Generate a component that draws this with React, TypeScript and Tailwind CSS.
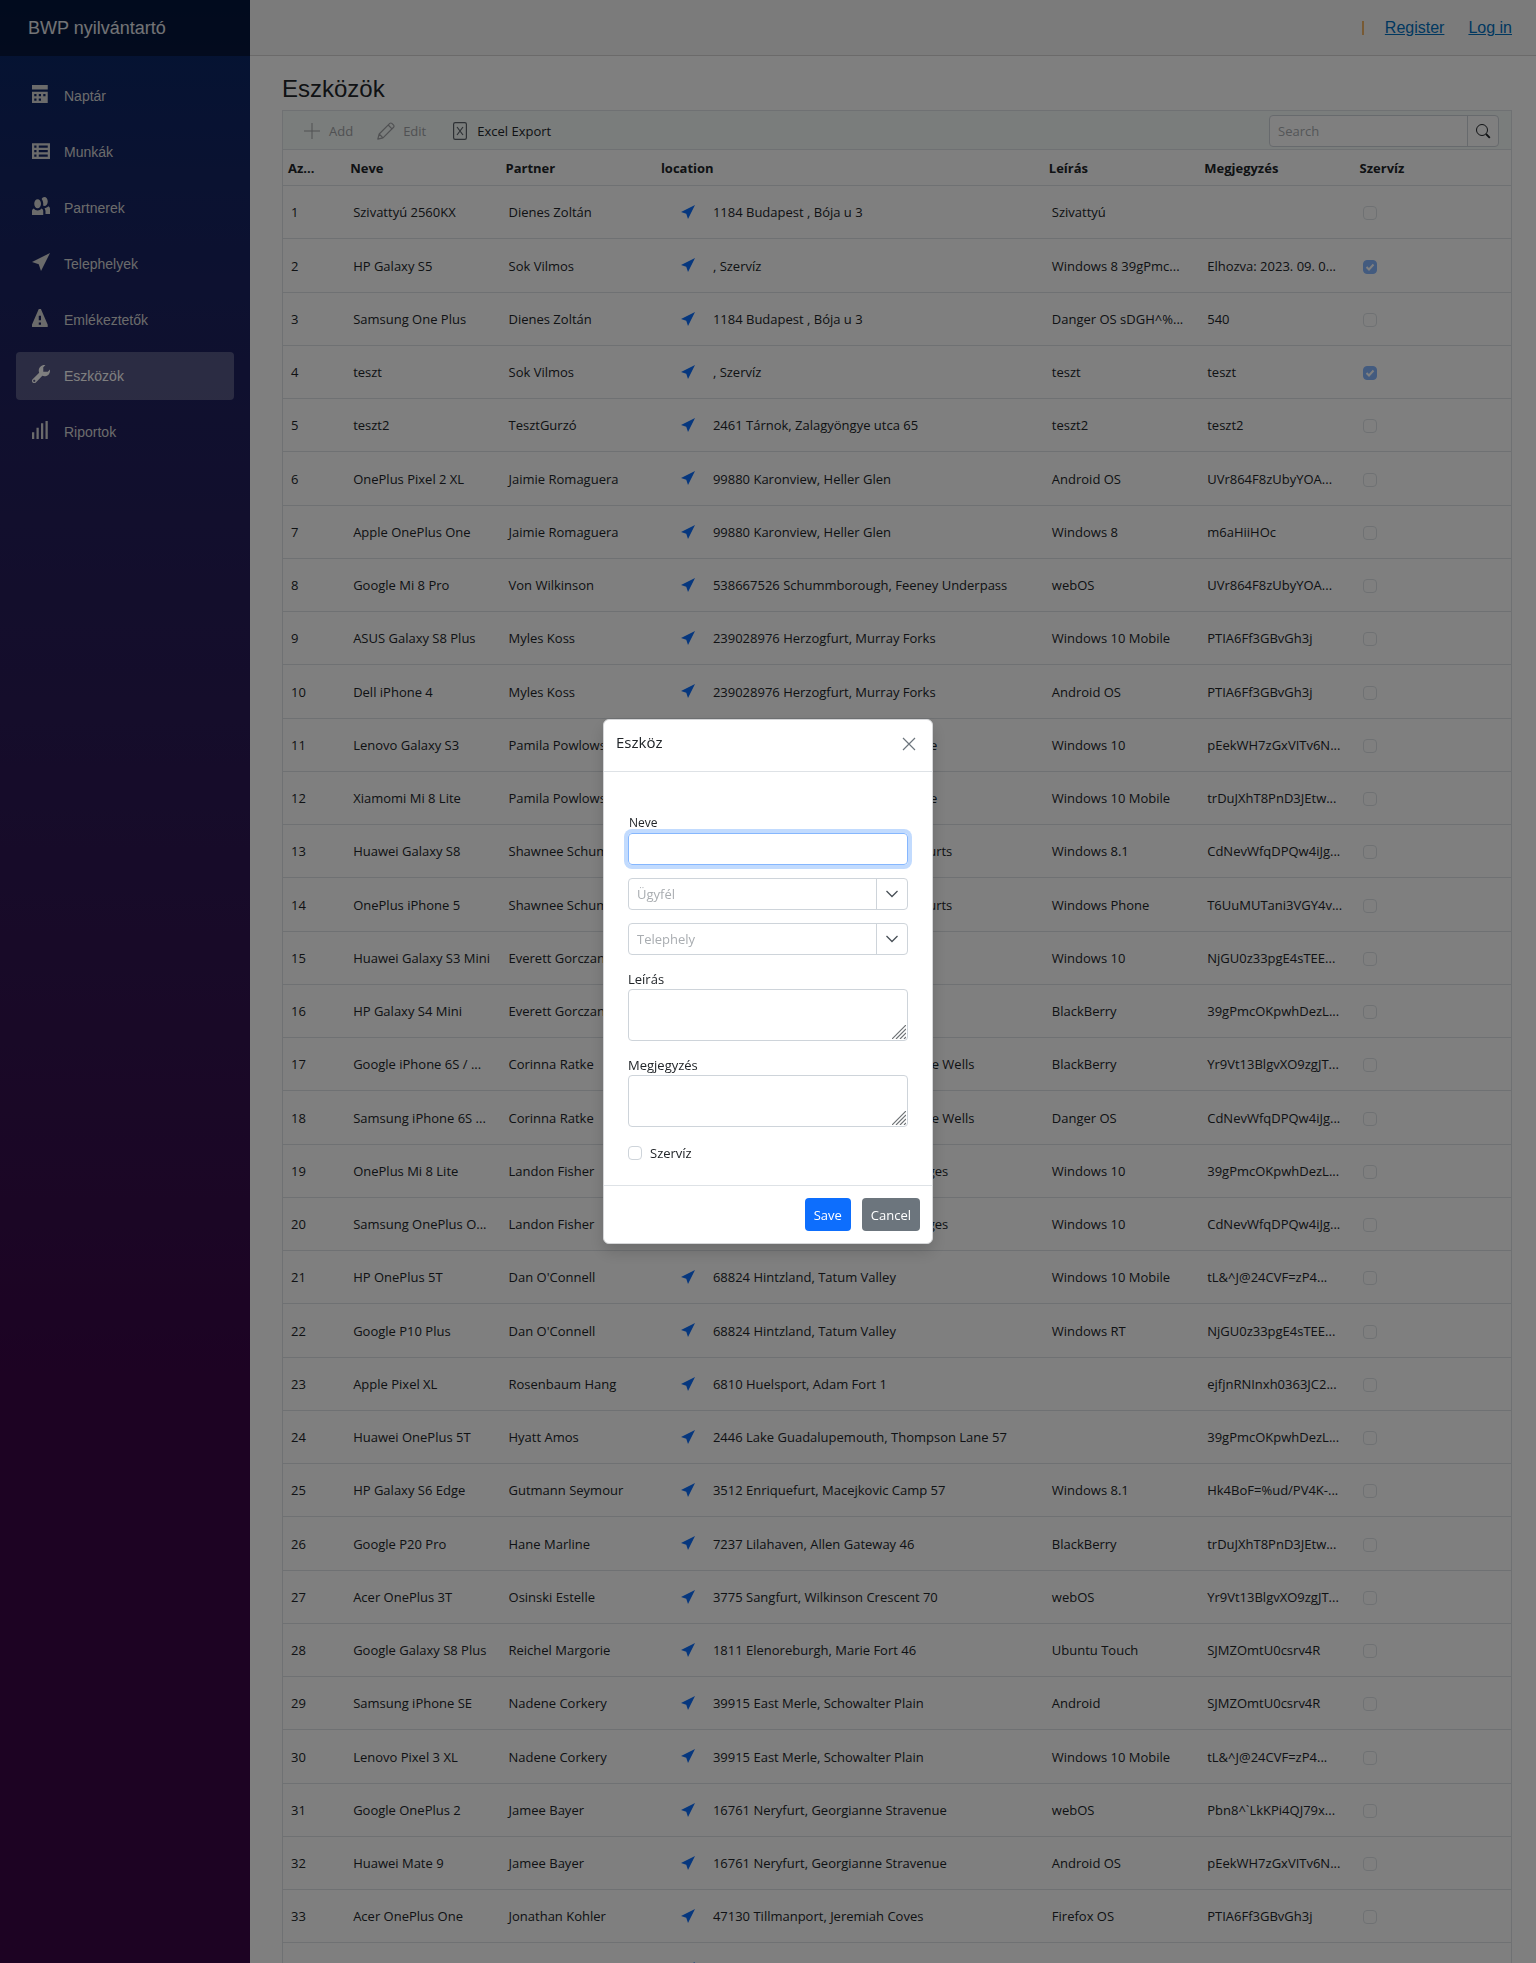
import React from "react";

const ICONS = {
  calendar:
    "M0 0v2h7v-2h-7zm0 3v4.91c0 .05.04.09.09.09h6.81c.05 0 .09-.04.09-.09v-4.91h-7zm1 1h1v1h-1v-1zm2 0h1v1h-1v-1zm2 0h1v1h-1v-1zm-4 2h1v1h-1v-1zm2 0h1v1h-1v-1z",
  spreadsheet:
    "M.09 1c-.05 0-.09.04-.09.09v6.81c0 .05.04.09.09.09h7.81c.05 0 .09-.04.09-.09v-6.81c0-.05-.04-.09-.09-.09h-7.81zm.91 1h1v1h-1v-1zm2 0h4v1h-4v-1zm-2 2h1v1h-1v-1zm2 0h4v1h-4v-1zm-2 2h1v1h-1v-1zm2 0h4v1h-4v-1z",
  people:
    "M5.5 0c-.51 0-.95.35-1.22.88.45.54.72 1.28.72 2.13 0 .29-.03.55-.09.81.19.11.38.19.59.19.83 0 1.5-.9 1.5-2s-.67-2-1.5-2zm-3 1c-.83 0-1.5.9-1.5 2s.67 2 1.5 2 1.5-.9 1.5-2-.67-2-1.5-2zm4.75 3.16c-.43.51-1.02.82-1.69.84.27.38.44.84.44 1.34v1.16h2v-2.16c0-.52-.31-.97-.75-1.19zm-6.5 1c-.44.22-.75.67-.75 1.19v1.66h5v-1.66c0-.52-.31-.97-.75-1.19-.45.53-1.06.84-1.75.84s-1.3-.32-1.75-.84z",
  location: "M8 0l-8 4 3 1 1 3 4-8z",
  warning:
    "M3.09 0c-.06 0-.1.04-.13.09l-2.94 6.81c-.02.05-.03.13-.03.19v.81c0 .05.04.09.09.09h6.81c.05 0 .09-.04.09-.09v-.81c0-.05-.01-.14-.03-.19l-2.94-6.81c-.02-.05-.07-.09-.13-.09h-.81zm-.09 3h1v2h-1v-2zm0 3h1v1h-1v-1z",
  wrench:
    "M5.5 0c-1.38 0-2.5 1.12-2.5 2.5 0 .32.08.62.19.91l-2.91 2.88c-.39.39-.39 1.05 0 1.44.2.2.46.28.72.28.26 0 .52-.09.72-.28l2.88-2.91c.28.11.58.19.91.19 1.38 0 2.5-1.12 2.5-2.5 0-.16 0-.32-.03-.47l-.97.97h-2v-2l.97-.97c-.15-.03-.31-.03-.47-.03zm-4.5 6.5c.28 0 .5.22.5.5s-.22.5-.5.5-.5-.22-.5-.5.22-.5.5-.5z",
  signal: "M6 0v8h1v-8h-1zm-2 1v7h1v-7h-1zm-2 2v5h1v-5h-1zm-2 2v3h1v-3h-1z",
};

type IconName = keyof typeof ICONS;

function Icon({ name, className }: { name: IconName; className: string }) {
  return (
    <svg viewBox="0 0 8 8" fill="currentColor" aria-hidden="true" className={className}>
      <path d={ICONS[name]} />
    </svg>
  );
}

const NAV: { icon: IconName; label: string; active?: boolean }[] = [
  { icon: "calendar", label: "Naptár" },
  { icon: "spreadsheet", label: "Munkák" },
  { icon: "people", label: "Partnerek" },
  { icon: "location", label: "Telephelyek" },
  { icon: "warning", label: "Emlékeztetők" },
  { icon: "wrench", label: "Eszközök", active: true },
  { icon: "signal", label: "Riportok" },
];

type Row = [name: string, partner: string, location: string, description: string, note: string, service?: boolean];

const ROWS: Row[] = [
  ["Szivattyú 2560KX", "Dienes Zoltán", "1184 Budapest , Bója u 3", "Szivattyú", ""],
  ["HP Galaxy S5", "Sok Vilmos", ", Szervíz", "Windows 8 39gPmc...", "Elhozva: 2023. 09. 0...", true],
  ["Samsung One Plus", "Dienes Zoltán", "1184 Budapest , Bója u 3", "Danger OS sDGH^%...", "540"],
  ["teszt", "Sok Vilmos", ", Szervíz", "teszt", "teszt", true],
  ["teszt2", "TesztGurzó", "2461 Tárnok, Zalagyöngye utca 65", "teszt2", "teszt2"],
  ["OnePlus Pixel 2 XL", "Jaimie Romaguera", "99880 Karonview, Heller Glen", "Android OS", "UVr864F8zUbyYOA..."],
  ["Apple OnePlus One", "Jaimie Romaguera", "99880 Karonview, Heller Glen", "Windows 8", "m6aHiiHOc"],
  ["Google Mi 8 Pro", "Von Wilkinson", "538667526 Schummborough, Feeney Underpass", "webOS", "UVr864F8zUbyYOA..."],
  ["ASUS Galaxy S8 Plus", "Myles Koss", "239028976 Herzogfurt, Murray Forks", "Windows 10 Mobile", "PTIA6Ff3GBvGh3j"],
  ["Dell iPhone 4", "Myles Koss", "239028976 Herzogfurt, Murray Forks", "Android OS", "PTIA6Ff3GBvGh3j"],
  ["Lenovo Galaxy S3", "Pamila Powlowski", "14077 Port Karenville, Danielle Grove", "Windows 10", "pEekWH7zGxVITv6N..."],
  ["Xiamomi Mi 8 Lite", "Pamila Powlowski", "14077 Port Karenville, Danielle Grove", "Windows 10 Mobile", "trDuJXhT8PnD3JEtw..."],
  ["Huawei Galaxy S8", "Shawnee Schumm", "50213 Lake Marionton, Schumm Courts", "Windows 8.1", "CdNevWfqDPQw4iJg..."],
  ["OnePlus iPhone 5", "Shawnee Schumm", "50213 Lake Marionton, Schumm Courts", "Windows Phone", "T6UuMUTani3VGY4v..."],
  ["Huawei Galaxy S3 Mini", "Everett Gorczany", "7214 Iva Way", "Windows 10", "NjGU0z33pgE4sTEE..."],
  ["HP Galaxy S4 Mini", "Everett Gorczany", "7214 Iva Way", "BlackBerry", "39gPmcOKpwhDezL..."],
  ["Google iPhone 6S / ...", "Corinna Ratke", "30584 North Corinnamouth, Suzanne Wells", "BlackBerry", "Yr9Vt13BlgvXO9zgJT..."],
  ["Samsung iPhone 6S ...", "Corinna Ratke", "30584 North Corinnamouth, Suzanne Wells", "Danger OS", "CdNevWfqDPQw4iJg..."],
  ["OnePlus Mi 8 Lite", "Landon Fisher", "81346 Port Landonbury, Fisher Bridges", "Windows 10", "39gPmcOKpwhDezL..."],
  ["Samsung OnePlus O...", "Landon Fisher", "81346 Port Landonbury, Fisher Bridges", "Windows 10", "CdNevWfqDPQw4iJg..."],
  ["HP OnePlus 5T", "Dan O'Connell", "68824 Hintzland, Tatum Valley", "Windows 10 Mobile", "tL&^J@24CVF=zP4..."],
  ["Google P10 Plus", "Dan O'Connell", "68824 Hintzland, Tatum Valley", "Windows RT", "NjGU0z33pgE4sTEE..."],
  ["Apple Pixel XL", "Rosenbaum Hang", "6810 Huelsport, Adam Fort 1", "", "ejfjnRNInxh0363JC2..."],
  ["Huawei OnePlus 5T", "Hyatt Amos", "2446 Lake Guadalupemouth, Thompson Lane 57", "", "39gPmcOKpwhDezL..."],
  ["HP Galaxy S6 Edge", "Gutmann Seymour", "3512 Enriquefurt, Macejkovic Camp 57", "Windows 8.1", "Hk4BoF=%ud/PV4K-..."],
  ["Google P20 Pro", "Hane Marline", "7237 Lilahaven, Allen Gateway 46", "BlackBerry", "trDuJXhT8PnD3JEtw..."],
  ["Acer OnePlus 3T", "Osinski Estelle", "3775 Sangfurt, Wilkinson Crescent 70", "webOS", "Yr9Vt13BlgvXO9zgJT..."],
  ["Google Galaxy S8 Plus", "Reichel Margorie", "1811 Elenoreburgh, Marie Fort 46", "Ubuntu Touch", "SJMZOmtU0csrv4R"],
  ["Samsung iPhone SE", "Nadene Corkery", "39915 East Merle, Schowalter Plain", "Android", "SJMZOmtU0csrv4R"],
  ["Lenovo Pixel 3 XL", "Nadene Corkery", "39915 East Merle, Schowalter Plain", "Windows 10 Mobile", "tL&^J@24CVF=zP4..."],
  ["Google OnePlus 2", "Jamee Bayer", "16761 Neryfurt, Georgianne Stravenue", "webOS", "Pbn8^`LkKPi4QJ79x..."],
  ["Huawei Mate 9", "Jamee Bayer", "16761 Neryfurt, Georgianne Stravenue", "Android OS", "pEekWH7zGxVITv6N..."],
  ["Acer OnePlus One", "Jonathan Kohler", "47130 Tillmanport, Jeremiah Coves", "Firefox OS", "PTIA6Ff3GBvGh3j"],
  ["", "", "", "", ""],
];

const HEADERS = ["Az...", "Neve", "Partner", "location", "Leírás", "Megjegyzés", "Szervíz"];

function Sidebar() {
  return (
    <aside className="h-full w-[250px] shrink-0 bg-linear-to-b from-[#052767] to-[#3a0647] to-70%">
      <div className="flex h-14 items-center bg-black/40 pl-7">
        <a href="#" className="text-[18px] text-white/90">BWP nyilvántartó</a>
      </div>
      <nav className="flex flex-col gap-2 px-4 pt-4">
        {NAV.map((item) => (
          <a
            key={item.label}
            href="#"
            className={
              item.active
                ? "flex h-12 items-center gap-[14px] rounded bg-white/25 px-4 text-sm text-white"
                : "flex h-12 items-center gap-[14px] rounded px-4 text-sm text-[#d7d7d7]"
            }
          >
            <Icon name={item.icon} className="mb-1 size-[18px]" />
            <span>{item.label}</span>
          </a>
        ))}
      </nav>
    </aside>
  );
}

function Toolbar() {
  return (
    <div className="flex h-[39px] items-center border-b border-[#dee2e6] bg-[#f5faf8] pt-[2px] pr-3 pl-5">
      <button type="button" disabled className="flex items-center gap-2 text-[#a0a3a6]">
        <svg viewBox="0 0 18 18" className="size-[18px]" fill="none" stroke="currentColor">
          <path d="M9 1v16M1 9h16" />
        </svg>
        <span className="pt-px">Add</span>
      </button>
      <button type="button" disabled className="ml-6 flex items-center gap-2 text-[#a0a3a6]">
        <svg viewBox="0 0 18 18" className="size-[18px]" fill="none" stroke="currentColor" strokeWidth="1.200" strokeLinejoin="round">
          <path d="M.8 17.200l1.400-5.200L12.800 1.400a1.400 1.400 0 0 1 2 0l1.800 1.800a1.400 1.400 0 0 1 0 2L6 15.800zM2.200 12l3.800 3.800M11.200 3l3.800 3.800" />
        </svg>
        <span className="pt-px">Edit</span>
      </button>
      <button type="button" className="ml-[25px] flex items-center gap-2 text-[#212529]">
        <svg viewBox="0 0 18 18" className="size-[18px] text-[#5c636a]" fill="none" stroke="currentColor" strokeWidth="1.200">
          <rect x="2.600" y=".6" width="12.800" height="16.800" rx="1.600" />
          <path d="M6 5l6 8M12 5l-6 8" />
        </svg>
        <span className="pt-px">Excel Export</span>
      </button>
      <div className="ml-auto flex h-8 w-[230px] overflow-hidden rounded border border-[#ced4da] bg-white">
        <input aria-label="Search" placeholder="Search" className="min-w-0 flex-1 px-2 pt-[2px] placeholder:text-[#a9adb1] outline-none" />
        <button type="button" aria-label="Search" className="flex w-[31px] items-center justify-center border-l border-[#ced4da] text-[#212529]">
          <svg viewBox="0 0 16 16" className="size-4" fill="none" stroke="currentColor">
            <circle cx="7" cy="7" r="5.500" />
            <path d="M11 11l3.800 3.800" strokeWidth="1.800" />
          </svg>
        </button>
      </div>
    </div>
  );
}

function Grid() {
  return (
    <table className="w-full table-fixed border-separate border-spacing-0 text-left">
      <colgroup>
        <col className="w-[62px]" />
        <col className="w-[155px]" />
        <col className="w-[155px]" />
        <col className="w-[387px]" />
        <col className="w-[155px]" />
        <col className="w-[155px]" />
        <col className="w-[156px]" />
      </colgroup>
      <thead>
        <tr className="h-9">
          {HEADERS.map((h) => (
            <th key={h} scope="col" className="border-b border-[#dee2e6] pt-[2px] pl-[5px] font-bold">{h}</th>
          ))}
        </tr>
      </thead>
      <tbody className="[&_td]:border-b [&_td]:border-[#dee2e6] [&_td]:pt-[2px] [&_td]:pl-2 [&_td]:whitespace-nowrap">
        {ROWS.map(([name, partner, location, description, note, service], i) => (
          <tr key={i} className="h-[53px] [&:nth-child(4n+2)]:h-[54px]">
            <td>{name && i + 1}</td>
            <td>{name}</td>
            <td>{partner}</td>
            <td>
              <div className="flex h-5 items-center gap-[18px] pl-[17px]">
                <a href="#" aria-label="Location" className="text-[#0d6efd]">
                  <Icon name="location" className="mb-[3px] size-[14px]" />
                </a>
                <span>{location}</span>
              </div>
            </td>
            <td>{description}</td>
            <td>{note}</td>
            <td>
              <span className="relative block size-[14px]">
                <input
                  type="checkbox"
                  aria-label={"Szervíz " + (i + 1)}
                  defaultChecked={service}
                  disabled
                  className="block size-[14px] appearance-none rounded border border-[#dee2e6] bg-white checked:border-[#86b6fe] checked:bg-[#86b6fe]"
                />
                {service && (
                  <svg viewBox="0 0 14 14" className="absolute inset-0 size-[14px]" fill="none" stroke="white" strokeWidth="2">
                    <path d="M3.500 7l2.500 2.500 4.500-5" />
                  </svg>
                )}
              </span>
            </td>
          </tr>
        ))}
      </tbody>
    </table>
  );
}

function Dropdown({ label }: { label: string }) {
  return (
    <div className="relative h-8">
      <select aria-label={label} defaultValue="" className="size-full appearance-none rounded border border-[#ced4da] bg-white px-2 pt-[2px] text-[#a9adb1]">
        <option value="">{label}</option>
      </select>
      <span className="pointer-events-none absolute inset-y-px right-px flex w-[31px] items-center justify-center border-l border-[#ced4da]">
        <svg viewBox="0 0 12 8" className="h-2 w-3" fill="none" stroke="#495057" strokeWidth="1.300">
          <path d="M.5 1L6 6.500 11.500 1" />
        </svg>
      </span>
    </div>
  );
}

function TextArea({ id, label }: { id: string; label: string }) {
  return (
    <div className="mt-3">
      <label htmlFor={id} className="block pt-[2px] leading-5">{label}</label>
      <div className="relative">
        <textarea id={id} className="block h-[52px] w-full resize-none rounded border border-[#ced4da] p-2" />
        <svg viewBox="0 0 14 14" className="absolute right-[2px] bottom-[2px] size-[14px]" stroke="#6f7376" strokeWidth="1.200" fill="none" aria-hidden="true">
          <path d="M0 14L14 0M4 14L14 4M8 14l6-6M12 14l2-2" />
        </svg>
      </div>
    </div>
  );
}

function DeviceDialog() {
  return (
    <div role="dialog" aria-label="Eszköz" className="w-[330px] rounded-md border border-[#d5d6d8] bg-white text-[#212529] shadow-[0_8px_16px_rgba(0,0,0,0.15)]">
      <div className="flex h-13 items-start justify-between border-b border-[#dee2e6] pt-3 pr-4 pl-3">
        <h2 className="text-[15px] leading-5">Eszköz</h2>
        <button type="button" aria-label="Close" className="mt-[5px] text-[#6c757d]">
          <svg viewBox="0 0 14 14" className="size-[14px]" fill="none" stroke="currentColor" strokeWidth="1.200">
            <path d="M1 1l12 12M13 1L1 13" />
          </svg>
        </button>
      </div>
      <form className="px-6 pt-[41px] pb-[22px]">
        <label htmlFor="neve" className="block pl-px text-xs leading-5">Neve</label>
        <input id="neve" className="block h-8 w-full rounded border border-[#86b7fe] px-2 ring-4 ring-[#c2dbfe] outline-none" />
        <div className="mt-[13px] flex flex-col gap-[13px]">
          <Dropdown label="Ügyfél" />
          <Dropdown label="Telephely" />
        </div>
        <TextArea id="leiras" label="Leírás" />
        <TextArea id="megjegyzes" label="Megjegyzés" />
        <label className="mt-4 flex items-center gap-2 leading-5">
          <input type="checkbox" className="size-[14px] appearance-none rounded border border-[#ced4da]" />
          Szervíz
        </label>
      </form>
      <div className="flex justify-end gap-[11px] border-t border-[#dee2e6] p-3">
        <button type="button" className="h-[33px] rounded bg-[#0d6efd] px-[9px] pt-[2px] text-white">Save</button>
        <button type="button" className="h-[33px] rounded bg-[#6c757d] px-[9px] pt-[2px] text-white">Cancel</button>
      </div>
    </div>
  );
}

export default function App() {
  return (
    <div className="relative flex h-screen overflow-hidden bg-white font-['Liberation_Sans',sans-serif] text-[#212529]">
      <Sidebar />
      <main className="min-w-0 flex-1">
        <header className="flex h-14 items-center justify-end gap-6 border-b border-[#d6d5d5] bg-[#f7f7f7] pr-6 text-base">
          <span className="mr-[-3px] h-[14px] w-[2px] bg-[#f0b468]" />
          <a href="#" className="text-[#0071c1] underline">Register</a>
          <a href="#" className="text-[#0071c1] underline">Log in</a>
        </header>
        <div className="pr-6 pl-8">
          <h1 className="pt-[19px] pb-[7px] text-2xl leading-7">Eszközök</h1>
          <section className="border border-[#dee2e6] font-['Open_Sans',sans-serif] text-[13px]">
            <Toolbar />
            <Grid />
          </section>
        </div>
      </main>
      <div className="fixed inset-0 flex items-center justify-center bg-black/50 font-['Open_Sans',sans-serif] text-[13px]">
        <DeviceDialog />
      </div>
    </div>
  );
}
